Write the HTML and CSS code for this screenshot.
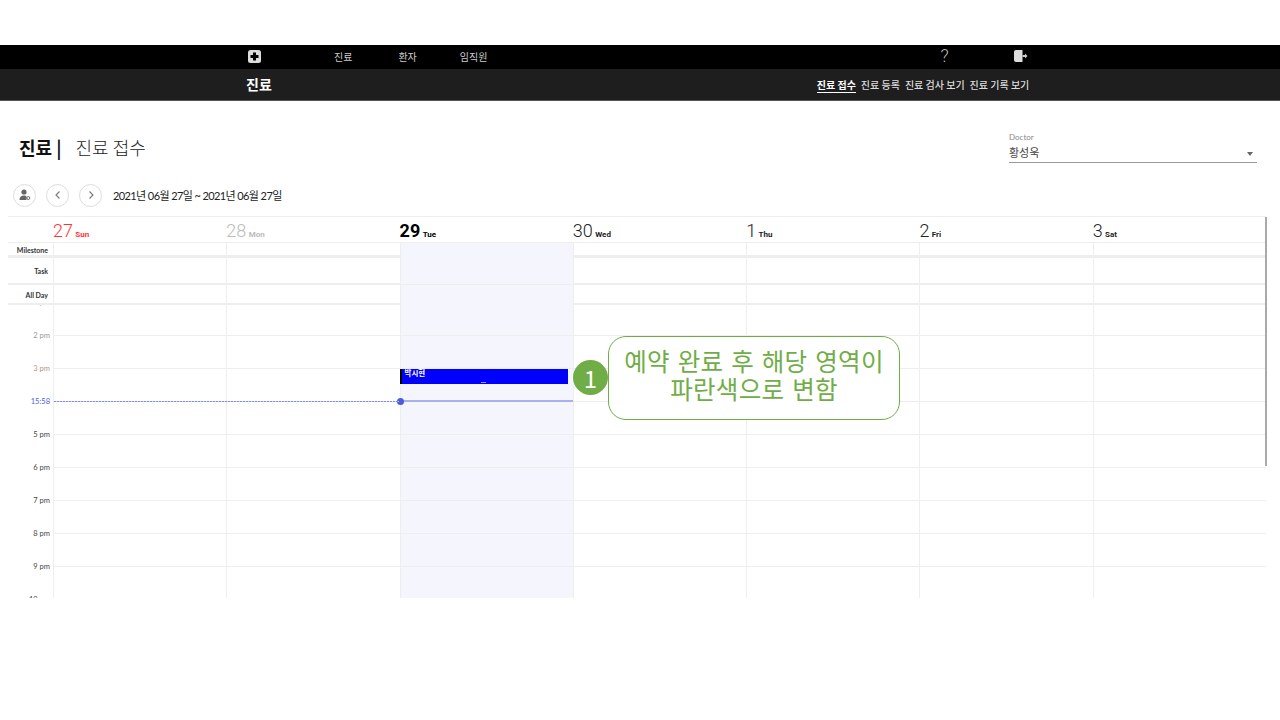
FILE: index.html
```html
<!DOCTYPE html><html><head><meta charset="utf-8"/>
<meta name="viewport" content="width=device-width, initial-scale=1.0">
<title>진료 접수</title>
<link rel="stylesheet" href="styles.css">
</head>
<body>

<div class="topnav">
	<svg class="logo" width="13" height="13" viewBox="0 0 13 13"><rect width="13" height="13" rx="2.5" fill="#ddd"/><path d="M5 2.500h3V5h2.500v3H8v2.500H5V8H2.500V5H5z" fill="#000"/></svg>
	<span class="menu m1">진료</span>
	<span class="menu m2">환자</span>
	<span class="menu m3">임직원</span>
	<span class="help">?</span>
	<svg class="exit" width="14" height="12" viewBox="0 0 14 12"><path d="M0 2Q0 0 2 0H8.500v12H2Q0 12 0 10z" fill="#ddd"/><path d="M8.500 5h2.500V3.500L13.500 6 11 8.500V7H8.500z" fill="#ccc"/></svg>
</div>
<div class="subnav">
	<b class="subtitle">진료</b>
	<div class="tabs">
		<span class="tab on">진료 접수</span>
		<span class="tab">진료 등록</span>
		<span class="tab">진료 검사 보기</span>
		<span class="tab">진료 기록 보기</span>
	</div>
</div>

<div class="main">
	<div class="head">
		<h1><b>진료 |</b><span>진료 접수</span></h1>
		<div class="doctor">
			<label>Doctor</label>
			<div class="select">황성욱<i></i></div>
		</div>
	</div>

	<div class="toolbar">
		<span class="round"><svg width="12" height="12" viewBox="0 0 12 12"><circle cx="5" cy="3" r="2.600" fill="#666"/><path d="M0.500 11q0-4.500 4.500-4.500 2 0 2.500 1v3.500z" fill="#666"/><circle cx="9.300" cy="9" r="1.500" fill="none" stroke="#666"/></svg></span>
		<span class="round"><svg width="10" height="10" viewBox="0 0 10 10"><path d="M6.500 1.500 3 5l3.500 3.500" fill="none" stroke="#777" stroke-width="1.100"/></svg></span>
		<span class="round"><svg width="10" height="10" viewBox="0 0 10 10"><path d="M3.500 1.500 7 5 3.500 8.500" fill="none" stroke="#777" stroke-width="1.100"/></svg></span>
		<span class="range">2021년 06월 27일 ~ 2021년 06월 27일</span>
	</div>

	<div class="calendar">
		<div class="row dates">
			<div></div>
			<div class="date sun">27 <small>Sun</small></div>
			<div class="date mon">28 <small>Mon</small></div>
			<div class="date today">29 <small>Tue</small></div>
			<div class="date">30 <small>Wed</small></div>
			<div class="date">1 <small>Thu</small></div>
			<div class="date">2 <small>Fri</small></div>
			<div class="date">3 <small>Sat</small></div>
		</div>
		<div class="row milestone">
			<div class="name">Milestone</div><div></div><div></div><div class="tcol"></div><div></div><div></div><div></div><div></div>
		</div>
		<div class="row task">
			<div class="name">Task</div><div></div><div></div><div class="tcol"></div><div></div><div></div><div></div><div></div>
		</div>
		<div class="row allday">
			<div class="name">All Day</div><div></div><div></div><div class="tcol"></div><div></div><div></div><div></div><div></div>
		</div>
		<div class="row times">
			<div class="hours">
				<span class="pale">1 pm</span>
				<span class="pale">2 pm</span>
				<span class="tan">3 pm</span>
				<span class="now">15:58</span>
				<span>5 pm</span>
				<span>6 pm</span>
				<span>7 pm</span>
				<span>8 pm</span>
				<span>9 pm</span>
				<span>10 pm</span>
			</div>
			<div class="day"></div>
			<div class="day"></div>
			<div class="day tcol">
				<div class="event"><b>박시현</b><i></i></div>
				<div class="nowline"></div>
				<div class="nowdot"></div>
			</div>
			<div class="day"></div>
			<div class="day"></div>
			<div class="day"></div>
			<div class="day"></div>
			<div class="nowdash"></div>
		</div>
		<div class="thumb"></div>
	</div>
</div>

<div class="badge">1</div>
<div class="callout">예약 완료 후 해당 영역이<br>파란색으로 변함</div>

</body>
</html>
```
FILE: styles.css
```css
* {
	box-sizing: border-box;
}
body {
	margin: 0;
	padding-top: 45px;
	height: 720px;
	overflow: hidden;
	background: #fff;
	position: relative;
	font-family: "Noto Sans CJK KR", "Noto Sans", sans-serif;
	color: #222;
}
/* nav */
.topnav {
	display: flex;
	align-items: center;
	height: 24px;
	padding-bottom: 2px;
	background: #000;
	color: #ccc;
	font-size: 10px;
}
.logo {
	margin-left: 248px;
}
.menu.m1 {
	margin-left: 73px;
}
.menu.m2 {
	margin-left: 46px;
}
.menu.m3 {
	margin-left: 43px;
}
.help {
	margin-left: 453px;
	font-family: Roboto, sans-serif;
	font-size: 18px;
	font-weight: 300;
	line-height: 20px;
	color: #bbb;
}
.exit {
	margin-left: 65px;
}
.subnav {
	display: flex;
	align-items: center;
	height: 32px;
	padding-bottom: 1px;
	background: #1e1e1e;
	border-bottom: 1px solid #555;
	color: #fff;
}
.subtitle {
	margin-left: 246px;
	font-size: 14px;
}
.tabs {
	display: flex;
	gap: 5px;
	margin: 1px 0 0 545px;
	font-size: 10px;
	color: #ddd;
	font-weight: 500;
}
.tab.on {
	color: #fff;
	font-weight: 700;
	border-bottom: 1px solid #fff;
}
/* head */
.main {
	padding: 0 14px 0 8px;
}
.head {
	display: flex;
	justify-content: space-between;
	height: 78px;
	padding: 30px 9px 0 11px;
}
h1 {
	margin: 0;
	font-size: 18px;
	line-height: 32px;
	font-weight: 300;
}
h1 b {
	font-weight: 700;
	color: #111;
}
h1 span {
	margin-left: 14px;
}
.doctor {
	width: 248px;
	padding-top: 1px;
}
.doctor label {
	display: block;
	font-family: Lato, sans-serif;
	font-size: 8px;
	line-height: 11px;
	color: #888;
}
.select {
	position: relative;
	height: 20px;
	font-size: 11px;
	line-height: 19px;
	color: #444;
	border-bottom: 1px solid #999;
}
.select i {
	position: absolute;
	right: 4px;
	top: 9px;
	border: 3px solid transparent;
	border-top: 4px solid #666;
	border-bottom: 0;
}
/* toolbar */
.toolbar {
	display: flex;
	align-items: center;
	gap: 10px;
	height: 32px;
	padding-left: 5px;
}
.round {
	display: flex;
	align-items: center;
	justify-content: center;
	width: 23px;
	height: 23px;
	border: 1px solid #ddd;
	border-radius: 50%;
}
.range {
	margin-left: 1px;
	font-family: Lato, "Noto Sans CJK KR", sans-serif;
	font-size: 11px;
	letter-spacing: -.6px;
}
/* calendar */
.calendar {
	position: relative;
	width: 1258px;
	margin-top: 5px;
	border-top: 1px solid #eee;
}
.row {
	display: grid;
	grid-template-columns: 45px repeat(7, 1fr);
	border-bottom: 1px solid #eee;
}
.row > div + div {
	border-left: 1px solid #eee;
}
.dates {
	height: 26px;
}
.row.dates > div {
	border-left: 0;
}
.date {
	font-family: Roboto, "Liberation Sans", sans-serif;
	font-size: 18px;
	line-height: 28px;
	font-weight: 300;
	word-spacing: -2px;
	color: #222;
	white-space: nowrap;
}
.date small {
	font-size: 8px;
	font-weight: 700;
}
.sun {
	color: #f33;
}
.mon {
	color: #bbb;
}
.today {
	font-weight: 700;
	color: #000;
}
.name {
	padding-right: 5px;
	font-family: Lato, sans-serif;
	font-size: 7px;
	font-weight: 700;
	text-align: right;
	color: #333;
}
.milestone {
	height: 15px;
	line-height: 15px;
	border-bottom-width: 3px;
}
.task {
	height: 27px;
	line-height: 26px;
	border-bottom-width: 2px;
}
.allday {
	height: 20px;
	line-height: 20px;
	border-bottom-width: 2px;
}
.tcol {
	background: #f5f6fd;
}
.times {
	position: relative;
	height: 293px;
	overflow: hidden;
	border-bottom: 0;
}
.hours {
	display: flex;
	flex-direction: column;
	margin-top: -19px;
	padding-right: 3px;
	font-family: Lato, sans-serif;
	font-size: 7.500px;
	text-align: right;
	color: #444;
}
.hours span {
	flex: none;
	height: 33px;
	line-height: 33px;
}
.hours .pale {
	color: #999;
}
.hours .tan {
	color: #a98;
}
.hours .now {
	color: #4a5bdc;
}
.day {
	position: relative;
	background-image: repeating-linear-gradient(to bottom, transparent 0, transparent 30px, #eee 30px, #eee 31px, transparent 31px, transparent 33px);
}
.event {
	position: absolute;
	left: -1px;
	top: 64px;
	width: 168px;
	height: 15px;
	background: #00f;
	border-left: 2px solid #000;
	color: #fff;
	font-size: 7.500px;
	line-height: 8px;
	padding-left: 3px;
}
.event i {
	position: absolute;
	left: 79px;
	bottom: 1px;
	width: 5px;
	height: 1px;
	background: #99f;
}
.nowline {
	position: absolute;
	left: 0;
	right: 0;
	top: 95px;
	height: 2px;
	background: #a9b0f0;
}
.nowdot {
	position: absolute;
	left: -4px;
	top: 93px;
	width: 7px;
	height: 7px;
	border-radius: 50%;
	background: #4a5bdc;
}
.nowdash {
	position: absolute;
	left: 46px;
	top: 96px;
	width: 345px;
	height: 1px;
	background-image: repeating-linear-gradient(to right, #7c88f4 0, #7c88f4 2px, #d5d9fb 2px, #d5d9fb 3px);
	border-left: 0 !important;
}
.thumb {
	position: absolute;
	right: -1px;
	top: 0;
	width: 2px;
	height: 249px;
	background: #aaa;
}
/* callout */
.badge {
	position: absolute;
	left: 573px;
	top: 360px;
	width: 35px;
	height: 35px;
	border-radius: 50%;
	background: #70ad47;
	color: #fff;
	font-size: 24px;
	line-height: 35px;
	text-align: center;
}
.callout {
	position: absolute;
	left: 608px;
	top: 336px;
	width: 292px;
	height: 84px;
	padding-top: 10px;
	border: 1px solid #70ad47;
	border-radius: 18px;
	background: #fff;
	color: #70ad47;
	font-size: 24.500px;
	word-spacing: 2px;
	letter-spacing: .3px;
	line-height: 28px;
	text-align: center;
}
```
